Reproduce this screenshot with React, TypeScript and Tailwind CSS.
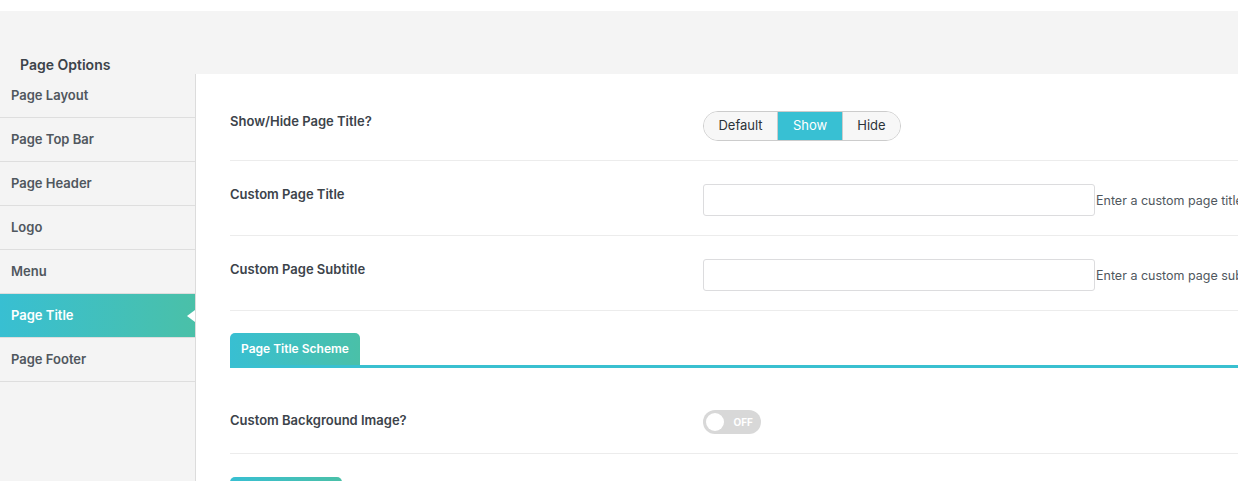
import { useState } from 'react';

const SECTIONS = ['Page Layout', 'Page Top Bar', 'Page Header', 'Logo', 'Menu', 'Page Title', 'Page Footer'];

const font = { fontFamily: 'Inter, "Liberation Sans", sans-serif' };

export default function App() {
  const [active, setActive] = useState('Page Title');
  const [titleMode, setTitleMode] = useState('Show');
  const [bgImage, setBgImage] = useState(false);

  return (
    <div className="min-h-screen bg-white pt-[11px] overflow-hidden" style={font}>
      <div className="bg-[#f4f4f4] min-h-[470px]">
        <div className="h-[63px] flex items-end pl-[20px]">
          <h2 className="text-[14px] leading-[18px] font-semibold text-[#3c434a]">Page Options</h2>
        </div>

        <div className="flex">
          {/* Sidebar */}
          <ul className="w-[196px] shrink-0 border-r border-[#dcdcdc] min-h-[420px]">
            {SECTIONS.map((s) => (
              <li key={s} className="border-b border-[#dedede]">
                <button
                  onClick={() => setActive(s)}
                  className={`relative w-full h-[43px] flex items-center pl-[11px] text-left text-[13px] font-semibold ${
                    active === s ? 'bg-gradient-to-r from-[#38bfd2] to-[#4ac0a8] text-white' : 'text-[#50575e]'
                  }`}
                >
                  {s}
                  {active === s && (
                    <span className="absolute right-0 top-1/2 -translate-y-1/2 w-0 h-0 border-y-[6px] border-y-transparent border-r-[8px] border-r-white" />
                  )}
                </button>
              </li>
            ))}
          </ul>

          {/* Main panel */}
          <div className="flex-1 min-w-0 bg-white pl-[34px] pt-[14px] overflow-hidden">
            <Row label="Show/Hide Page Title?">
              <div className="flex h-[30px] rounded-full border border-[#cccccc] overflow-hidden text-[13px] w-fit">
                {[
                  { k: 'Default', w: 'w-[73px]' },
                  { k: 'Show', w: 'w-[65px]' },
                  { k: 'Hide', w: 'w-[58px]' },
                ].map((o, i) => (
                  <button
                    key={o.k}
                    onClick={() => setTitleMode(o.k)}
                    className={`${o.w} flex items-center justify-center ${i > 0 ? 'border-l border-[#cccccc]' : ''} ${
                      titleMode === o.k ? 'bg-[#38c0d3] text-white' : 'bg-[#f7f7f7] text-[#2c3338]'
                    }`}
                  >
                    {o.k}
                  </button>
                ))}
              </div>
            </Row>

            <Row label="Custom Page Title">
              <TextWithHelp help="Enter a custom page title" />
            </Row>

            <Row label="Custom Page Subtitle">
              <TextWithHelp help="Enter a custom page subtitle" />
            </Row>

            <div className="mt-[22px] border-b-[3px] border-[#39c0d0]">
              <div className="w-fit h-[32px] px-[11px] flex items-center rounded-t-[5px] bg-gradient-to-r from-[#38bfd2] to-[#4ac0a8] text-white text-[12px] font-semibold">
                Page Title Scheme
              </div>
            </div>

            <div className="pt-[19px]">
              <Row label="Custom Background Image?">
                <button
                  onClick={() => setBgImage(!bgImage)}
                  className={`relative block w-[58px] h-[24px] rounded-full ${bgImage ? 'bg-[#38c0d3]' : 'bg-[#d8d8d8]'}`}
                >
                  <span className={`absolute top-[3px] w-[18px] h-[18px] rounded-full bg-white ${bgImage ? 'right-[3px]' : 'left-[3px]'}`} />
                  <span className={`absolute top-1/2 -translate-y-1/2 text-[10px] font-bold text-white ${bgImage ? 'left-[9px]' : 'right-[8px]'}`}>
                    {bgImage ? 'ON' : 'OFF'}
                  </span>
                </button>
              </Row>
            </div>

            <div className="mt-[23px]">
              <div className="w-[112px] h-[32px] rounded-t-[5px] bg-gradient-to-r from-[#38bfd2] to-[#4ac0a8]" />
            </div>
          </div>
        </div>
      </div>
    </div>
  );
}

function Row({ label, children }: { label: string; children: React.ReactNode }) {
  return (
    <div className="flex items-start pt-[23px] pb-[19px] border-b border-[#ececec]">
      <div className="w-[473px] shrink-0 text-[13px] leading-[20px] font-semibold text-[#3c434a]">{label}</div>
      <div className="min-w-0 flex">{children}</div>
    </div>
  );
}

function TextWithHelp({ help }: { help: string }) {
  return (
    <div className="flex items-center whitespace-nowrap">
      <input className="shrink-0 w-[392px] h-[32px] border border-[#dcdcde] rounded-[3px] px-2 text-[13px] bg-white focus:outline-none" />
      <span className="text-[12.5px] text-[#50575e] pl-px translate-y-px">{help}</span>
    </div>
  );
}
